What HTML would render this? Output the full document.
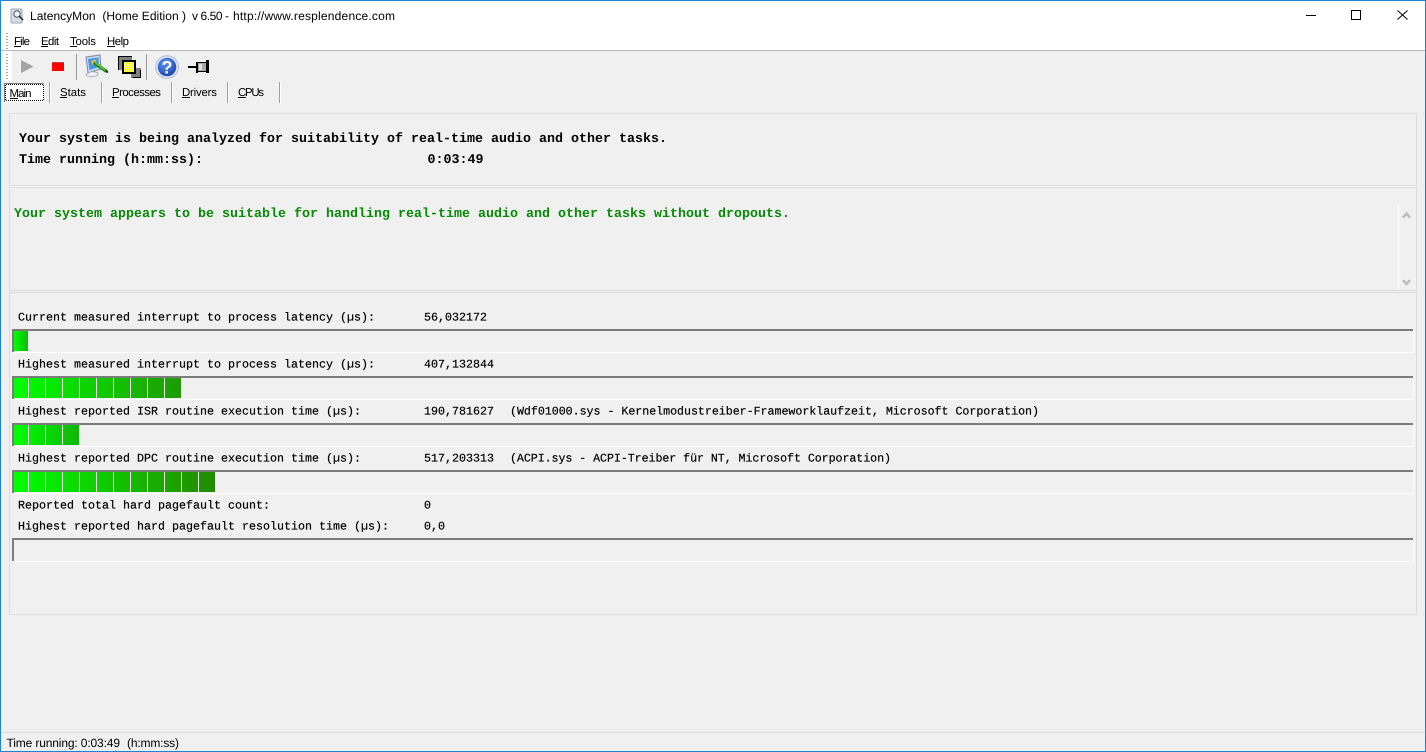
<!DOCTYPE html>
<html><head><meta charset="utf-8"><title>LatencyMon</title>
<style>
html,body{margin:0;padding:0;background:#f0f0f0;width:1426px;height:752px;overflow:hidden}
svg{display:block;position:absolute;left:0;top:0}
text{white-space:pre;text-rendering:geometricPrecision}
.u{font:12px "Liberation Sans",sans-serif;fill:#000}
.s{font:11.4px "Liberation Sans",sans-serif;fill:#000}
.b{font:bold 13.33px "Liberation Mono",monospace;fill:#000}
.m{font:11.67px "Liberation Mono",monospace;fill:#000;stroke:#000;stroke-width:.2px}
.g{font:bold 13.33px "Liberation Mono",monospace;fill:#078a07}
</style></head><body>
<svg width="1426" height="752" viewBox="0 0 1426 752" xmlns="http://www.w3.org/2000/svg" shape-rendering="crispEdges">
<defs>
<linearGradient id="g1" x1="0" x2="1" y1="0" y2="0"><stop offset="0" stop-color="#00ff00"/><stop offset="1" stop-color="#0aba0a"/></linearGradient>
<linearGradient id="g2" x1="0" x2="1" y1="0" y2="0"><stop offset="0" stop-color="#00ff00"/><stop offset="1" stop-color="#1f9a05"/></linearGradient>
<linearGradient id="g3" x1="0" x2="1" y1="0" y2="0"><stop offset="0" stop-color="#00ff00"/><stop offset="1" stop-color="#10b508"/></linearGradient>
<linearGradient id="g4" x1="0" x2="1" y1="0" y2="0"><stop offset="0" stop-color="#00ff00"/><stop offset="1" stop-color="#238a00"/></linearGradient>
<radialGradient id="hb" cx=".4" cy=".3" r=".8"><stop offset="0" stop-color="#5f92ee"/><stop offset="1" stop-color="#123fb0"/></radialGradient>
<pattern id="chk" width="2" height="2" patternUnits="userSpaceOnUse"><rect width="2" height="2" fill="#ffff00"/><rect width="1" height="1" fill="#ffffb0"/></pattern>
<pattern id="foc" width="2" height="2" patternUnits="userSpaceOnUse"><rect width="1" height="1" fill="#000"/><rect x="1" y="1" width="1" height="1" fill="#000"/></pattern>
</defs>

<rect width="1426" height="752" fill="#f0f0f0"/>
<!-- title + menu -->
<rect x="0" y="0" width="1426" height="50" fill="#fff"/>
<rect x="0" y="50" width="1426" height="1" fill="#b9b9b9"/>
<rect x="0" y="51" width="12" height="30" fill="#fff"/>

<!-- app icon -->
<g shape-rendering="auto">
<rect x="11" y="9" width="11" height="14" rx="1" fill="#d5dde6" stroke="#9aa5b2" stroke-width="1"/>
<circle cx="17" cy="14" r="3.2" fill="#eef5fb" stroke="#4b5766"/>
<path d="M19 16 L23 20" stroke="#333" stroke-width="1.6"/>
</g>
<text class="u" x="30" y="20" textLength="156" lengthAdjust="spacing">LatencyMon  (Home Edition )</text>
<text class="u" x="192" y="20" textLength="37" lengthAdjust="spacing">v 6.50 -</text>
<text class="u" x="233" y="20" textLength="162" lengthAdjust="spacing">http://www.resplendence.com</text>

<!-- window controls -->
<rect x="1306" y="15" width="10" height="1" fill="#000"/>
<rect x="1351.5" y="10.5" width="9" height="9" fill="none" stroke="#000"/>
<g shape-rendering="auto"><path d="M1397.5 10.5 L1407.5 19.5 M1407.5 10.5 L1397.5 19.5" stroke="#000" stroke-width="1" fill="none"/></g>

<!-- grip dots -->
<g fill="#a9a9a9">
<rect x="6" y="33" width="2" height="1"/><rect x="6" y="36" width="2" height="1"/><rect x="6" y="39" width="2" height="1"/><rect x="6" y="42" width="2" height="1"/><rect x="6" y="45" width="2" height="1"/><rect x="6" y="48" width="2" height="1"/>
<rect x="6" y="54" width="2" height="1"/><rect x="6" y="57" width="2" height="1"/><rect x="6" y="60" width="2" height="1"/><rect x="6" y="63" width="2" height="1"/><rect x="6" y="66" width="2" height="1"/><rect x="6" y="69" width="2" height="1"/><rect x="6" y="72" width="2" height="1"/><rect x="6" y="75" width="2" height="1"/><rect x="6" y="78" width="2" height="1"/>
</g>

<!-- menu -->
<text class="s" x="14" y="45" textLength="16" lengthAdjust="spacing">File</text><rect x="14" y="46" width="7" height="1" fill="#000"/>
<text class="s" x="41" y="45" textLength="18" lengthAdjust="spacing">Edit</text><rect x="41" y="46" width="7" height="1" fill="#000"/>
<text class="s" x="70" y="45" textLength="26" lengthAdjust="spacing">Tools</text><rect x="70" y="46" width="7" height="1" fill="#000"/>
<text class="s" x="107" y="45" textLength="22" lengthAdjust="spacing">Help</text><rect x="107" y="46" width="8" height="1" fill="#000"/>

<!-- toolbar -->
<g shape-rendering="auto">
<path d="M21 60 L33.5 66.5 L21 73 Z" fill="#a4a4a4"/>
</g>
<rect x="52" y="62" width="12" height="9" fill="#ff0000"/>
<rect x="52" y="62" width="12" height="1" fill="#c04040"/>
<rect x="76" y="54" width="1" height="26" fill="#9a9a9a"/>
<rect x="146" y="54" width="1" height="26" fill="#9a9a9a"/>

<!-- monitor/tool icon -->
<g shape-rendering="auto">
<path d="M86 57 L100 55 L101 69 L88 73 Z" fill="#c8d8f0" stroke="#7a8aa8" stroke-width="1"/>
<path d="M88 59 L98.500 57.500 L99 67 L89.500 70 Z" fill="#3f96e8"/>
<path d="M91 61 L97 59 L95 63 L92 65Z" fill="#e9b94a"/>
<path d="M86 75 C89 71 95 71 98 73 C99 77 89 78 86 75Z" fill="#eef0f7" stroke="#9aa2bb" stroke-width=".8"/>
<path d="M95 63.500 L106 71" stroke="#1f8a1f" stroke-width="3.400" stroke-linecap="round"/>
<path d="M95 62.500 L105 70" stroke="#63d63f" stroke-width="1.200"/>
<path d="M106 71 L108 72.500" stroke="#111" stroke-width="1.400"/>
</g>

<!-- overlapping windows icon -->
<rect x="118" y="56" width="14" height="14" fill="#808080"/>
<rect x="118" y="56" width="14" height="1" fill="#000"/><rect x="118" y="56" width="1" height="14" fill="#000"/>
<rect x="131" y="68" width="10" height="10" fill="#808080"/>
<rect x="133" y="77" width="8" height="1" fill="#000"/><rect x="140" y="70" width="1" height="8" fill="#000"/>
<rect x="122" y="60" width="14" height="14" fill="#000"/>
<rect x="124" y="62" width="10" height="10" fill="url(#chk)"/>

<!-- help icon -->
<g shape-rendering="auto">
<circle cx="167" cy="67" r="11.300" fill="#e8edf6" stroke="#a9bad3" stroke-width="1"/>
<circle cx="167" cy="67" r="9.300" fill="url(#hb)"/>
<text x="161.500" y="73.500" style="font:bold 18px 'Liberation Sans',sans-serif;fill:#fff">?</text>
</g>

<!-- pin icon -->
<rect x="188" y="66" width="8" height="2" fill="#000"/>
<rect x="196" y="62" width="2" height="11" fill="#000"/>
<rect x="198" y="63" width="8" height="9" fill="#a8a8a8"/>
<rect x="198" y="62" width="9" height="1" fill="#000"/>
<rect x="198" y="71" width="9" height="1" fill="#000"/>
<rect x="206" y="60" width="3" height="13" fill="#000"/>
<rect x="199" y="64" width="3" height="6" fill="#e0e0e0"/>

<!-- tabs -->
<rect x="4" y="83" width="40" height="19" fill="#fff"/>
<rect x="4" y="83" width="40" height="1" fill="#7d7d7d"/>
<rect x="4" y="83" width="1" height="19" fill="#7d7d7d"/>
<rect x="5" y="84" width="38" height="1" fill="url(#foc)"/>
<rect x="5" y="100" width="38" height="1" fill="url(#foc)"/>
<rect x="5" y="84" width="1" height="17" fill="url(#foc)"/>
<rect x="43" y="84" width="1" height="17" fill="url(#foc)"/>
<g>
<rect x="49" y="82" width="1" height="21" fill="#a0a0a0"/><rect x="50" y="82" width="1" height="21" fill="#fff"/>
<rect x="101" y="82" width="1" height="21" fill="#a0a0a0"/><rect x="102" y="82" width="1" height="21" fill="#fff"/>
<rect x="171" y="82" width="1" height="21" fill="#a0a0a0"/><rect x="172" y="82" width="1" height="21" fill="#fff"/>
<rect x="227" y="82" width="1" height="21" fill="#a0a0a0"/><rect x="228" y="82" width="1" height="21" fill="#fff"/>
<rect x="279" y="82" width="1" height="21" fill="#a0a0a0"/><rect x="280" y="82" width="1" height="21" fill="#fff"/>
</g>
<text class="s" x="9.5" y="97" textLength="22" lengthAdjust="spacing">Main</text><rect x="10" y="98" width="8" height="1" fill="#000"/>
<text class="s" x="60" y="96" textLength="26" lengthAdjust="spacing">Stats</text><rect x="60" y="97" width="7" height="1" fill="#000"/>
<text class="s" x="112" y="96" textLength="49" lengthAdjust="spacing">Processes</text><rect x="112" y="97" width="7" height="1" fill="#000"/>
<text class="s" x="182" y="96" textLength="35" lengthAdjust="spacing">Drivers</text><rect x="182" y="97" width="8" height="1" fill="#000"/>
<text class="s" x="238" y="96" textLength="26" lengthAdjust="spacing">CPUs</text><rect x="238" y="97" width="8" height="1" fill="#000"/>

<!-- panels -->
<rect x="9.5" y="113.5" width="1407" height="72" fill="none" stroke="#dcdcdc"/>
<rect x="9.5" y="187.5" width="1407" height="103" fill="none" stroke="#dcdcdc"/>
<rect x="9.5" y="292.5" width="1407" height="322" fill="none" stroke="#dcdcdc"/>
<rect x="10" y="186" width="1406" height="1" fill="#fff" opacity=".6"/>

<text class="b" x="19" y="142" textLength="648" lengthAdjust="spacing">Your system is being analyzed for suitability of real-time audio and other tasks.</text>
<text class="b" x="19" y="163" textLength="184" lengthAdjust="spacing">Time running (h:mm:ss):</text>
<text class="b" x="427.5" y="163" textLength="56" lengthAdjust="spacing">0:03:49</text>

<text class="g" x="14" y="217" textLength="776" lengthAdjust="spacing">Your system appears to be suitable for handling real-time audio and other tasks without dropouts.</text>

<!-- scrollbar -->
<rect x="1398" y="205" width="1" height="85" fill="#fff"/>
<g shape-rendering="auto" fill="none" stroke="#bdbdbd" stroke-width="2.600">
<path d="M1403 217.500 L1406.500 213.500 L1410 217.500"/>
<path d="M1403 280 L1406.500 284 L1410 280"/>
</g>

<!-- labels -->
<text class="m" x="18" y="320.700" textLength="357" lengthAdjust="spacing">Current measured interrupt to process latency (µs):</text>
<text class="m" x="424" y="320.700" textLength="63" lengthAdjust="spacing">56,032172</text>

<text class="m" x="18" y="367.700" textLength="357" lengthAdjust="spacing">Highest measured interrupt to process latency (µs):</text>
<text class="m" x="424" y="367.700" textLength="70" lengthAdjust="spacing">407,132844</text>

<text class="m" x="18" y="414.700" textLength="343" lengthAdjust="spacing">Highest reported ISR routine execution time (µs):</text>
<text class="m" x="424" y="414.700" textLength="70" lengthAdjust="spacing">190,781627</text>
<text class="m" x="510" y="414.700" textLength="529" lengthAdjust="spacing">(Wdf01000.sys - Kernelmodustreiber-Frameworklaufzeit, Microsoft Corporation)</text>

<text class="m" x="18" y="461.700" textLength="343" lengthAdjust="spacing">Highest reported DPC routine execution time (µs):</text>
<text class="m" x="424" y="461.700" textLength="70" lengthAdjust="spacing">517,203313</text>
<text class="m" x="510" y="461.700" textLength="381" lengthAdjust="spacing">(ACPI.sys - ACPI-Treiber für NT, Microsoft Corporation)</text>

<text class="m" x="18" y="508.700" textLength="252" lengthAdjust="spacing">Reported total hard pagefault count:</text>
<text class="m" x="424" y="508.700">0</text>
<text class="m" x="18" y="529.700" textLength="371" lengthAdjust="spacing">Highest reported hard pagefault resolution time (µs):</text>
<text class="m" x="424" y="529.700" textLength="21" lengthAdjust="spacing">0,0</text>

<!-- bar frames -->
<g fill="#7c7c7c">
<rect x="12" y="329" width="1401" height="2"/><rect x="12" y="329" width="2" height="23"/>
<rect x="12" y="376" width="1401" height="2"/><rect x="12" y="376" width="2" height="23"/>
<rect x="12" y="423" width="1401" height="2"/><rect x="12" y="423" width="2" height="23"/>
<rect x="12" y="470" width="1401" height="2"/><rect x="12" y="470" width="2" height="23"/>
<rect x="12" y="538" width="1401" height="2"/><rect x="12" y="538" width="2" height="23"/>
</g>
<g fill="#fff">
<rect x="13" y="352" width="1401" height="1"/><rect x="1413" y="331" width="1" height="22"/>
<rect x="13" y="399" width="1401" height="1"/><rect x="1413" y="378" width="1" height="22"/>
<rect x="13" y="446" width="1401" height="1"/><rect x="1413" y="425" width="1" height="22"/>
<rect x="13" y="493" width="1401" height="1"/><rect x="1413" y="472" width="1" height="22"/>
<rect x="13" y="561" width="1401" height="1"/><rect x="1413" y="540" width="1" height="22"/>
</g>
<!-- bar fills -->
<rect x="14" y="331" width="14" height="20" fill="url(#g1)"/>
<rect x="14" y="378" width="167" height="20" fill="url(#g2)"/>
<rect x="14" y="425" width="65" height="20" fill="url(#g3)"/>
<rect x="14" y="472" width="201" height="20" fill="url(#g4)"/>
<g fill="#f4fff4">
<rect x="28" y="378" width="1" height="20"/><rect x="45" y="378" width="1" height="20"/><rect x="62" y="378" width="1" height="20"/><rect x="79" y="378" width="1" height="20"/><rect x="96" y="378" width="1" height="20"/><rect x="113" y="378" width="1" height="20"/><rect x="130" y="378" width="1" height="20"/><rect x="147" y="378" width="1" height="20"/><rect x="164" y="378" width="1" height="20"/>
<rect x="28" y="425" width="1" height="20"/><rect x="45" y="425" width="1" height="20"/><rect x="62" y="425" width="1" height="20"/>
<rect x="28" y="472" width="1" height="20"/><rect x="45" y="472" width="1" height="20"/><rect x="62" y="472" width="1" height="20"/><rect x="79" y="472" width="1" height="20"/><rect x="96" y="472" width="1" height="20"/><rect x="113" y="472" width="1" height="20"/><rect x="130" y="472" width="1" height="20"/><rect x="147" y="472" width="1" height="20"/><rect x="164" y="472" width="1" height="20"/><rect x="181" y="472" width="1" height="20"/><rect x="198" y="472" width="1" height="20"/>
</g>

<!-- status bar -->
<rect x="1" y="732" width="1424" height="1" fill="#d9d9d9"/>
<text class="u" x="6.5" y="747" textLength="113.500" lengthAdjust="spacing">Time running: 0:03:49</text>
<text class="u" x="127" y="747" textLength="52" lengthAdjust="spacing">(h:mm:ss)</text>

<!-- window border -->
<rect x="0" y="0" width="1426" height="1" fill="#1883d7"/>
<rect x="0" y="751" width="1426" height="1" fill="#1883d7"/>
<rect x="0" y="0" width="1" height="752" fill="#1883d7"/>
<rect x="1425" y="0" width="1" height="752" fill="#1883d7"/>
</svg>
</body></html>
